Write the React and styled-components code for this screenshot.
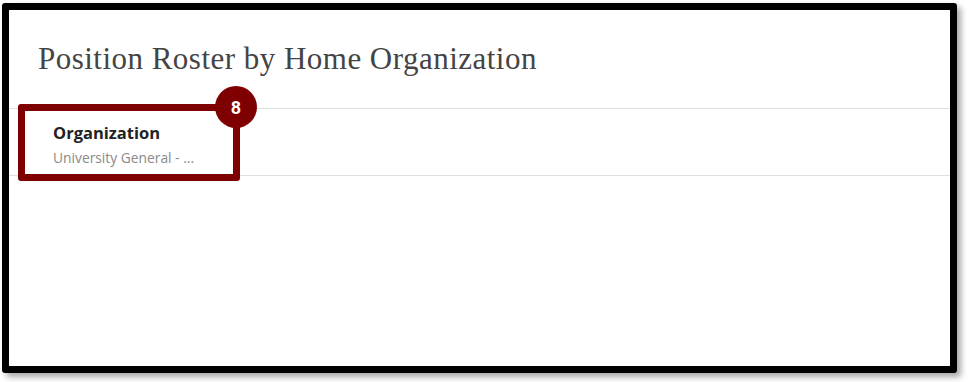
import React from 'react';
import styled, { createGlobalStyle } from 'styled-components';

const GlobalStyle = createGlobalStyle`
  html, body {
    margin: 0;
    padding: 0;
    background: #ffffff;
  }
`;

const Page = styled.div`
  width: 975px;
  height: 382px;
  padding: 3px 0 0 2px;
  box-sizing: border-box;
`;

const Frame = styled.div`
  position: relative;
  width: 955px;
  height: 370px;
  box-sizing: border-box;
  border: 7px solid #000;
  border-radius: 3px;
  background: #fff;
  box-shadow: 4px 4px 6px rgba(0, 0, 0, 0.35);
  display: flex;
  flex-direction: column;
`;

const Title = styled.h1`
  margin: 0;
  padding: 31px 0 0 29px;
  height: 98px;
  box-sizing: border-box;
  font-family: 'Liberation Serif', serif;
  font-weight: 400;
  font-size: 31px;
  line-height: 36px;
  letter-spacing: 0.48px;
  color: #444;
`;

const FilterBar = styled.div`
  height: 68px;
  box-sizing: border-box;
  border-top: 1px solid #e0e0e0;
  border-bottom: 1px solid #e0e0e0;
  display: flex;
  align-items: flex-start;
  padding: 13px 0 0 44px;
`;

const Field = styled.div`
  display: flex;
  flex-direction: column;
  gap: 5px;
  font-family: 'Open Sans', 'Noto Sans', sans-serif;
`;

const FieldLabel = styled.div`
  font-size: 16.5px;
  font-weight: 700;
  color: #222;
  line-height: 22px;
`;

const FieldValue = styled.div`
  font-size: 13.8px;
  color: #8a8a8a;
  line-height: 18px;
`;

const Callout = styled.div`
  position: absolute;
  left: 9px;
  top: 94px;
  width: 222px;
  height: 77px;
  box-sizing: border-box;
  border: 7px solid #7f0000;
  border-radius: 3px;
  pointer-events: none;
`;

const Badge = styled.div`
  position: absolute;
  left: 206px;
  top: 76px;
  width: 42px;
  height: 42px;
  border-radius: 50%;
  background: #7f0000;
  color: #fff;
  display: flex;
  align-items: center;
  justify-content: center;
  font-family: 'Roboto', 'Liberation Sans', sans-serif;
  font-weight: 700;
  font-size: 18px;
`;

const App = () => (
  <>
    <GlobalStyle />
    <Page>
      <Frame>
        <Title>Position Roster by Home Organization</Title>
        <FilterBar>
          <Field>
            <FieldLabel>Organization</FieldLabel>
            <FieldValue>University General - ...</FieldValue>
          </Field>
        </FilterBar>
        <Callout />
        <Badge>8</Badge>
      </Frame>
    </Page>
  </>
);

export default App;
